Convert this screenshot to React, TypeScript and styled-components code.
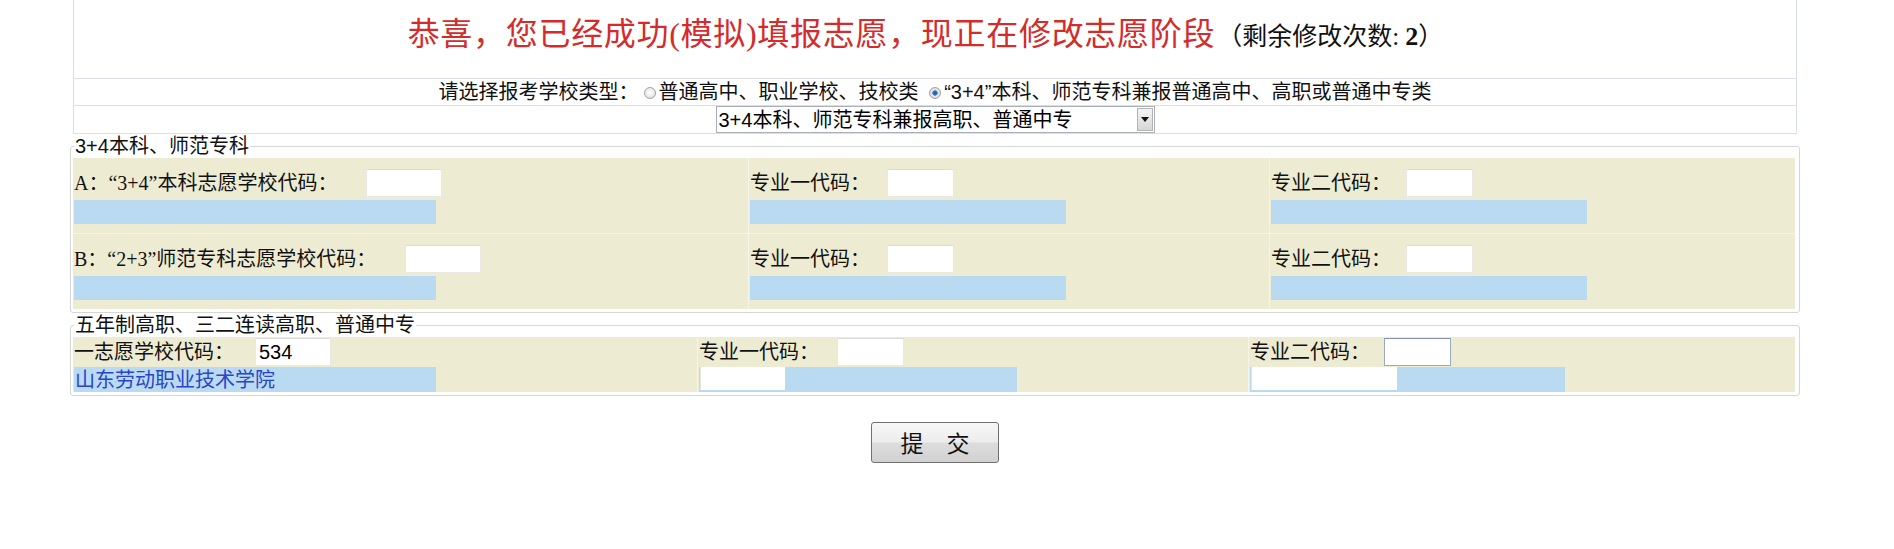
import React from "react";
import styled, { createGlobalStyle } from "styled-components";

const GlobalStyle = createGlobalStyle`
  html, body { margin: 0; padding: 0; background: #ffffff; }
  body {
    font-family: "Liberation Serif", "Noto Sans CJK SC", serif;
    color: #111111;
  }
`;

const Page = styled.div`
  width: 1730px;
  margin-left: 70px;
  display: flex;
  flex-direction: column;
`;

const HeadTable = styled.div`
  margin: 0 3px;
  border-left: 1px solid #d9dfe5;
  border-right: 1px solid #d9dfe5;
  display: flex;
  flex-direction: column;
`;

const TitleRow = styled.div`
  box-sizing: border-box;
  height: 79px;
  padding: 12px 19px 0 0;
  border-bottom: 1px solid #d9dfe5;
  text-align: center;
  line-height: 44px;
  white-space: nowrap;
`;

const TitleRed = styled.span`
  color: #d42b2b;
  font-size: 32px;
  letter-spacing: 0.7px;
  font-family: "Liberation Serif", "Noto Sans CJK SC", serif;
`;

const TitleCount = styled.span`
  color: #111111;
  font-size: 25px;
  margin-left: 2px;
  font-family: "Liberation Serif", "Noto Sans CJK SC", serif;
  b { font-weight: bold; font-size: 26px; }
`;

const ChoiceRow = styled.div`
  box-sizing: border-box;
  height: 27px;
  border-bottom: 1px solid #d9dfe5;
  display: flex;
  align-items: center;
  justify-content: center;
  font: 20px/26px "Liberation Sans", "Noto Sans CJK SC", sans-serif;
  color: #111111;
  white-space: nowrap;
`;

const Radio = styled.input.attrs({ type: "radio" })`
  appearance: none;
  -webkit-appearance: none;
  width: 12px;
  height: 12px;
  margin: 2px 3px 0 5px;
  border-radius: 50%;
  border: 1px solid #a3a3a3;
  box-sizing: border-box;
  background: radial-gradient(circle at 50% 45%, #ffffff 0, #e9e9e9 60%, #cfcfcf 100%);
  &:checked {
    background: radial-gradient(circle, #1d4f9a 0, #3a7fd0 2.4px, #e8e8e8 3px, #d0d0d0 100%);
  }
`;

const SelectRow = styled.div`
  box-sizing: border-box;
  height: 28px;
  border-bottom: 1px solid #d9dfe5;
  display: flex;
  justify-content: center;
  align-items: flex-start;
`;

const SelectWrap = styled.div`
  position: relative;
  width: 439px;
  height: 27px;
`;

const SchoolSelect = styled.select`
  appearance: none;
  -webkit-appearance: none;
  width: 100%;
  height: 100%;
  box-sizing: border-box;
  margin: 0;
  border: 1px solid #a9b0b8;
  border-radius: 0;
  background: #ffffff;
  padding: 0 20px 0 2px;
  font: 20px "Liberation Sans", "Noto Sans CJK SC", sans-serif;
  color: #000000;
  outline: none;
`;

const SelectArrow = styled.span`
  position: absolute;
  top: 2px;
  right: 2px;
  bottom: 2px;
  width: 16px;
  box-sizing: border-box;
  border: 1px solid #b4b4b4;
  background: linear-gradient(#f4f4f4, #d6d6d6);
  display: flex;
  align-items: center;
  justify-content: center;
  pointer-events: none;
  &::after {
    content: "";
    border-left: 4px solid transparent;
    border-right: 4px solid transparent;
    border-top: 5px solid #111111;
  }
`;

const Group = styled.fieldset`
  margin: 0;
  padding: 0 4px 3px 2px;
  border: 1px solid #d6d6d6;
  border-radius: 3px;
  min-width: 0;
`;

const GroupTitle = styled.legend`
  padding: 0 1px;
  margin-left: 1px;
  font: 20px/24px "Liberation Sans", "Noto Sans CJK SC", sans-serif;
  color: #111111;
`;

const CellGrid = styled.div<{ $cols: string; $rowH: number }>`
  display: grid;
  grid-template-columns: ${(p) => p.$cols};
  grid-auto-rows: ${(p) => p.$rowH}px;
  gap: 1px;
  background: #f5f5ec;
`;

const Cell = styled.div<{ $pt: number }>`
  background: #edecd3;
  padding: ${(p) => p.$pt}px 0 0 1px;
  display: flex;
  flex-direction: column;
  align-items: flex-start;
  min-width: 0;
`;

const FieldLine = styled.div`
  display: flex;
  align-items: center;
  height: 30px;
  font-size: 20px;
  line-height: 30px;
  white-space: nowrap;
  color: #111111;
`;

const CodeInput = styled.input<{ $w: number; $gap: number; $framed?: boolean }>`
  width: ${(p) => p.$w}px;
  height: 28px;
  box-sizing: border-box;
  margin: 0 0 0 ${(p) => p.$gap}px;
  padding: 0 3px;
  border: 1px solid ${(p) => (p.$framed ? "#9aabbd" : "#e9e9e4")};
  border-top-color: ${(p) => (p.$framed ? "#8394a8" : "#dcdcd6")};
  background: #ffffff;
  font: 20px "Liberation Sans", "Noto Sans CJK SC", sans-serif;
  color: #000000;
  outline: none;
`;

const InfoBar = styled.div<{ $w: number; $mt: number; $h: number }>`
  width: ${(p) => p.$w}px;
  height: ${(p) => p.$h}px;
  margin-top: ${(p) => p.$mt}px;
  background: #b9daf1;
  display: flex;
  align-items: flex-start;
  font: 20px/24px "Noto Sans CJK SC", sans-serif;
  color: #2a45c8;
  white-space: nowrap;
  padding-left: 1px;
  box-sizing: border-box;
`;

const BlankPick = styled.span<{ $w: number }>`
  width: ${(p) => p.$w}px;
  height: 23px;
  background: #ffffff;
  border-left: 1px solid #e4e4e4;
  box-sizing: border-box;
`;

const SubmitRow = styled.div`
  display: flex;
  justify-content: center;
  padding-top: 26px;
`;

const SubmitButton = styled.button`
  width: 128px;
  height: 41px;
  box-sizing: border-box;
  border: 1px solid #707070;
  border-radius: 3px;
  background: linear-gradient(#f7f7f7 0%, #ececec 48%, #dddddd 52%, #d1d1d1 100%);
  font: 23px/1 "Noto Sans CJK SC", sans-serif;
  color: #111111;
  padding: 0;
  cursor: pointer;
`;

type FieldProps = {
  label: string;
  inputW: number;
  gap: number;
  value?: string;
  framed?: boolean;
};

const Field = ({ label, inputW, gap, value, framed }: FieldProps) => (
  <FieldLine>
    <span>{label}</span>
    <CodeInput $w={inputW} $gap={gap} $framed={framed} defaultValue={value ?? ""} />
  </FieldLine>
);

export default function App() {
  return (
    <>
      <GlobalStyle />
      <Page>
        <HeadTable>
          <TitleRow>
            <TitleRed>恭喜，您已经成功(模拟)填报志愿，现正在修改志愿阶段</TitleRed>
            <TitleCount>
              （剩余修改次数: <b>2</b>）
            </TitleCount>
          </TitleRow>
          <ChoiceRow>
            <span>请选择报考学校类型：</span>
            <Radio name="kind" />
            <span>普通高中、职业学校、技校类</span>
            <span>&nbsp;</span>
            <Radio name="kind" defaultChecked />
            <span>“3+4”本科、师范专科兼报普通高中、高职或普通中专类</span>
          </ChoiceRow>
          <SelectRow>
            <SelectWrap>
              <SchoolSelect defaultValue="a">
                <option value="a">3+4本科、师范专科兼报高职、普通中专</option>
              </SchoolSelect>
              <SelectArrow />
            </SelectWrap>
          </SelectRow>
        </HeadTable>

        <Group>
          <GroupTitle>3+4本科、师范专科</GroupTitle>
          <CellGrid $cols="675px 520px 1fr" $rowH={75}>
            <Cell $pt={10}>
              <Field label="A：“3+4”本科志愿学校代码：" inputW={76} gap={29} />
              <InfoBar $w={362} $mt={2} $h={24} />
            </Cell>
            <Cell $pt={10}>
              <Field label="专业一代码：" inputW={67} gap={17} />
              <InfoBar $w={316} $mt={2} $h={24} />
            </Cell>
            <Cell $pt={10}>
              <Field label="专业二代码：" inputW={67} gap={15} />
              <InfoBar $w={316} $mt={2} $h={24} />
            </Cell>
            <Cell $pt={10}>
              <Field label="B：“2+3”师范专科志愿学校代码：" inputW={76} gap={29} />
              <InfoBar $w={362} $mt={2} $h={24} />
            </Cell>
            <Cell $pt={10}>
              <Field label="专业一代码：" inputW={67} gap={17} />
              <InfoBar $w={316} $mt={2} $h={24} />
            </Cell>
            <Cell $pt={10}>
              <Field label="专业二代码：" inputW={67} gap={15} />
              <InfoBar $w={316} $mt={2} $h={24} />
            </Cell>
          </CellGrid>
        </Group>

        <Group>
          <GroupTitle>五年制高职、三二连读高职、普通中专</GroupTitle>
          <CellGrid $cols="624px 550px 1fr" $rowH={55}>
            <Cell $pt={0}>
              <Field label="一志愿学校代码：" inputW={76} gap={21} value="534" />
              <InfoBar $w={362} $mt={0} $h={25}>
                山东劳动职业技术学院
              </InfoBar>
            </Cell>
            <Cell $pt={0}>
              <Field label="专业一代码：" inputW={67} gap={18} />
              <InfoBar $w={318} $mt={0} $h={25}>
                <BlankPick $w={85} />
              </InfoBar>
            </Cell>
            <Cell $pt={0}>
              <Field label="专业二代码：" inputW={67} gap={14} framed />
              <InfoBar $w={315} $mt={0} $h={25}>
                <BlankPick $w={146} />
              </InfoBar>
            </Cell>
          </CellGrid>
        </Group>

        <SubmitRow>
          <SubmitButton type="button">提　交</SubmitButton>
        </SubmitRow>
      </Page>
    </>
  );
}
